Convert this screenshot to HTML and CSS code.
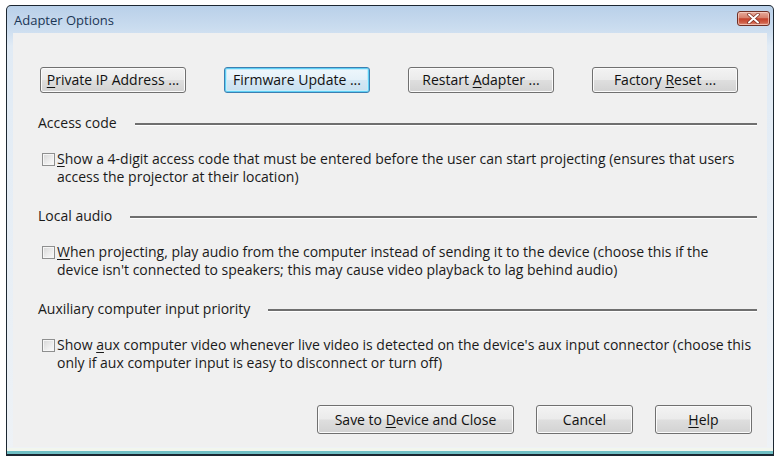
FILE: index.html
```html
<!DOCTYPE html>
<html lang="en">
<head>
<meta charset="utf-8">
<title>Adapter Options</title>
<link rel="stylesheet" href="styles.css">
</head>
<body>
<div class="window">
  <div class="titlebar">
    <span class="title">Adapter Options</span>
    <span class="close">
      <svg width="13" height="11" viewBox="0 0 13 11" aria-hidden="true">
        <path d="M2 1.5 L11 9.5 M11 1.5 L2 9.5" stroke="#7a2a1e" stroke-width="3.4" stroke-linecap="round"/>
        <path d="M2 1.5 L11 9.5 M11 1.5 L2 9.5" stroke="#ffffff" stroke-width="2" stroke-linecap="round"/>
      </svg>
    </span>
  </div>
  <div class="content">
    <div class="top-buttons">
      <button class="btn"><u>P</u>rivate IP Address ...</button>
      <button class="btn focus">Firmware Update ...</button>
      <button class="btn">Restart <u>A</u>dapter ...</button>
      <button class="btn">Factory <u>R</u>eset ...</button>
    </div>

    <div class="group-label"><span class="label-text">Access code</span><span class="rule"></span></div>
    <div class="check-row">
      <span class="box"></span>
      <span class="check-text"><u>S</u>how a 4-digit access code that must be entered before the user can start projecting (ensures that users<br>access the projector at their location)</span>
    </div>

    <div class="group-label"><span class="label-text">Local audio</span><span class="rule"></span></div>
    <div class="check-row">
      <span class="box"></span>
      <span class="check-text"><u>W</u>hen projecting, play audio from the computer instead of sending it to the device (choose this if the<br>device isn't connected to speakers; this may cause video playback to lag behind audio)</span>
    </div>

    <div class="group-label"><span class="label-text">Auxiliary computer input priority</span><span class="rule"></span></div>
    <div class="check-row">
      <span class="box"></span>
      <span class="check-text">Show <u>a</u>ux computer video whenever live video is detected on the device's aux input connector (choose this<br>only if aux computer input is easy to disconnect or turn off)</span>
    </div>

    <div class="bottom-buttons">
      <button class="btn wide">Save to <u>D</u>evice and Close</button>
      <button class="btn narrow">Cancel</button>
      <button class="btn narrow"><u>H</u>elp</button>
    </div>
  </div>
</div>
</body>
</html>
```

FILE: styles.css
```css
html, body {
  margin: 0;
  padding: 0;
  background: #ffffff;
}

body {
  font-family: "Open Sans", "DejaVu Sans", sans-serif;
  font-size: 14px;
  color: #1a1a1a;
}

.window {
  box-sizing: border-box;
  margin: 5px 0 0 6px;
  width: 768px;
  height: 451px;
  border: 1px solid #1c2731;
  border-bottom-width: 2px;
  border-radius: 5px 5px 0 0;
  background: linear-gradient(180deg, #b9d0e9 0px, #cadcef 22px, #e1ebf5 40px, #eef2f6 100%);
  box-shadow: inset 0 -3px 0 #6fbfc4, inset 0 -6px 0 #f2f6ee;
  display: flex;
  flex-direction: column;
  padding: 0 6px 7px 6px;
}

.titlebar {
  height: 27px;
  display: flex;
  align-items: flex-start;
  justify-content: space-between;
  margin-left: -6px;
}

.title {
  padding: 5px 0 0 7px;
  line-height: 18px;
  color: #1b3655;
  font-size: 13px;
}

.close {
  box-sizing: border-box;
  margin: 5px -3px 0 0;
  width: 33px;
  height: 15px;
  border: 1px solid #6f3026;
  border-radius: 3px;
  background: linear-gradient(180deg, #e6ab9c 0%, #d7806c 45%, #c4412b 52%, #cf5e47 80%, #e0937f 100%);
  box-shadow: inset 0 0 0 1px rgba(255, 220, 210, 0.6);
  display: flex;
  align-items: center;
  justify-content: center;
}

.close svg {
  display: block;
}

.content {
  flex: 1;
  background: #f0f0f0;
  display: flex;
  flex-direction: column;
  padding: 34px 10px 13px 25px;
}

.top-buttons {
  display: grid;
  grid-template-columns: repeat(4, 146px);
  column-gap: 38px;
  padding-left: 2px;
}

.btn {
  box-sizing: border-box;
  height: 26px;
  padding: 0;
  border: 1px solid #707070;
  border-radius: 3px;
  background: linear-gradient(180deg, #f3f3f3 0%, #ebebeb 48%, #dedede 52%, #d2d2d2 100%);
  box-shadow: inset 0 0 0 1px #fbfbfb;
  font-family: inherit;
  font-size: 14px;
  color: #111;
  line-height: 18px;
}

.btn u {
  text-underline-offset: 2px;
}

.btn.focus {
  border-color: #3c7fb1;
  box-shadow: inset 0 0 0 1px #5fd0f5, inset 0 0 0 2px #c4ecfb;
  background: linear-gradient(180deg, #eef7fc 0%, #e4f1f9 48%, #d3e7f4 52%, #c9e0ef 100%);
}

.group-label {
  display: flex;
  align-items: center;
  margin-top: 21px;
  height: 18px;
  line-height: 18px;
}

.label-text {
  color: #1a1a1a;
}

.rule {
  flex: 1;
  height: 0;
  margin: 3px 0 0 18px;
  border-top: 2px solid #6f6f6f;
  border-bottom: 1px solid #ffffff;
}

.check-row {
  display: flex;
  align-items: flex-start;
  margin-top: 18px;
  padding-left: 4px;
  line-height: 18px;
}

.box {
  box-sizing: border-box;
  flex: none;
  width: 13px;
  height: 13px;
  margin-top: 3px;
  border: 1px solid #8e8f8f;
  background: linear-gradient(135deg, #d6d6d6 0%, #ececec 55%, #fbfbfb 100%);
  box-shadow: inset 0 0 0 1px #f6f6f6;
}

.check-text {
  margin-left: 2px;
  white-space: nowrap;
}

.check-text u {
  text-underline-offset: 2px;
}

.bottom-buttons {
  margin-top: auto;
  display: flex;
  justify-content: flex-end;
  gap: 22px;
  padding-right: 5px;
}

.bottom-buttons .btn {
  height: 29px;
}

.btn.wide {
  width: 197px;
}

.btn.narrow {
  width: 97px;
}
```
